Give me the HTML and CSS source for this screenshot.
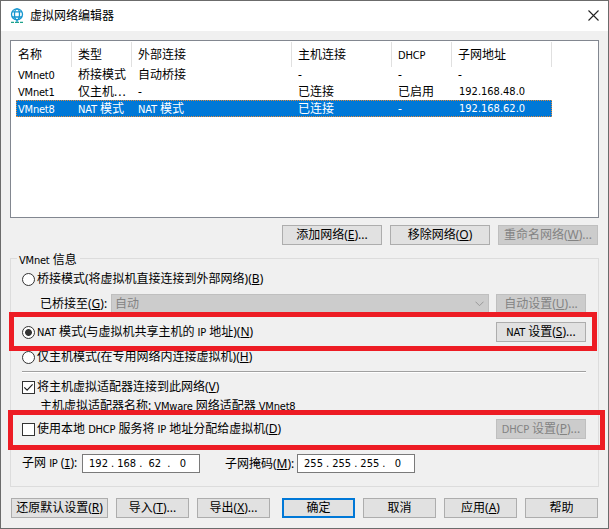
FILE: index.html
```html
<!DOCTYPE html>
<html lang="zh-CN">
<head>
<meta charset="utf-8">
<title>虚拟网络编辑器</title>
<link rel="stylesheet" href="styles.css">
</head>
<body>
<div class="window">
  <header class="titlebar">
    <svg class="app-icon" width="14" height="16" viewBox="0 0 14 16" fill="none" stroke="#1796cf" stroke-width="1.3">
      <circle cx="7" cy="6.3" r="5.5"/><ellipse cx="7" cy="6.3" rx="2.5" ry="5.5"/><path d="M2 3.8h10M2 9h10"/>
      <path stroke="#1fa38b" d="M1 14.4h3M5 14.4h4M10 14.4h3"/><path d="M7 12v2"/>
    </svg>
    <h1>虚拟网络编辑器</h1>
    <svg class="close" width="11" height="11" viewBox="0 0 11 11" stroke="#222" stroke-width="1.1"><path d="M.5.5l10 10M10.5.5l-10 10"/></svg>
  </header>

  <main>
    <section class="list">
      <div class="row head"><span>名称</span><span>类型</span><span>外部连接</span><span>主机连接</span><span><b class="en">DHCP</b></span><span>子网地址</span></div>
      <div class="row"><span><b class="en">VMnet0</b></span><span>桥接模式</span><span>自动桥接</span><span>-</span><span>-</span><span>-</span></div>
      <div class="row"><span><b class="en">VMnet1</b></span><span>仅主机<b class="dots">...</b></span><span>-</span><span>已连接</span><span>已启用</span><span class="ip">192.168.48.0</span></div>
      <div class="row selected"><span><b class="en">VMnet8</b></span><span><b class="en">NAT</b> 模式</span><span><b class="en">NAT</b> 模式</span><span>已连接</span><span>-</span><span class="ip">192.168.62.0</span></div>
    </section>

    <div class="list-actions">
      <button>添加网络(<u>E</u>)...</button>
      <button>移除网络(<u>O</u>)</button>
      <button disabled>重命名网络(<u>W</u>)...</button>
    </div>

    <section class="group">
      <h2><b class="en">VMnet</b> 信息</h2>
      <div class="line bridge"><i class="radio"></i><span>桥接模式(将虚拟机直接连接到外部网络)(<u>B</u>)</span></div>
      <div class="line bridge-to">
        <span class="bridge-label">已桥接至(<u>G</u>):</span>
        <div class="combo"><span>自动</span><svg width="9" height="6" viewBox="0 0 9 6" fill="none" stroke="#999"><path d="M.5.7l4 4 4-4"/></svg></div>
        <button disabled>自动设置(<u>U</u>)...</button>
      </div>
      <div class="line nat"><i class="radio on"></i><span><b class="en">NAT</b> 模式(与虚拟机共享主机的 <b class="en">IP</b> 地址)(<u>N</u>)</span><button><b class="en">NAT</b> 设置(<u>S</u>)...</button></div>
      <div class="line host-only"><i class="radio"></i><span>仅主机模式(在专用网络内连接虚拟机)(<u>H</u>)</span></div>
      <hr>
      <div class="line adapter"><i class="check"><svg width="11" height="11" viewBox="0 0 11 11" fill="none" stroke="#222" stroke-width="1.2"><path d="M1.3 5.3l2.8 2.8 5.5-5.7"/></svg></i><span>将主机虚拟适配器连接到此网络(<u>V</u>)</span></div>
      <div class="line adapter-name"><span>主机虚拟适配器名称: <b class="en">VMware</b> 网络适配器 <b class="en">VMnet8</b></span></div>
      <div class="line dhcp"><i class="check"></i><span>使用本地 <b class="en">DHCP</b> 服务将 <b class="en">IP</b> 地址分配给虚拟机(<u>D</u>)</span><button disabled><b class="en">DHCP</b> 设置(<u>P</u>)...</button></div>
      <div class="line subnet">
        <span class="ip-label">子网 <b class="en">IP</b> (<u class="serif-i">I</u>):</span>
        <div class="address"><b>192</b>.<b>168</b>.<b>62</b>.<b>0</b></div>
        <span class="mask-label">子网掩码(<u>M</u>):</span>
        <div class="address"><b>255</b>.<b>255</b>.<b>255</b>.<b>0</b></div>
      </div>
    </section>

    <footer>
      <button class="restore">还原默认设置(<u>R</u>)</button>
      <button>导入(<u>T</u>)...</button>
      <button>导出(<u>X</u>)...</button>
      <button class="default">确定</button>
      <button>取消</button>
      <button>应用(<u>A</u>)</button>
      <button>帮助</button>
    </footer>
  </main>
  <div class="mark mark-nat"></div>
  <div class="mark mark-dhcp"></div>
</div>
</body>
</html>
```

FILE: styles.css
```css
* { box-sizing: border-box; }
body { margin: 0; }
.window {
  position: relative;
  width: 609px;
  height: 529px;
  border: 1px solid #6b6b6b;
  background: #f0f0f0;
  color: #000;
  font: 12px/16px "Noto Sans", "Noto Sans CJK SC", sans-serif;
  white-space: nowrap;
  overflow: hidden;
}
b { font-weight: 400; }
.en, .ip, .address { font-family: "DejaVu Sans Condensed", "DejaVu Sans", sans-serif; font-stretch: condensed; }
.en { font-size: 11px; line-height: 1; letter-spacing: -0.2px; }
.dots { letter-spacing: 1px; }
.titlebar { display: flex; align-items: center; height: 30px; padding: 0 9px; background: #fff; }
.titlebar h1 { flex: 1; margin: 0 0 0 6px; font-size: 12px; font-weight: 400; }
.app-icon { margin-top: -1px; }
.close { margin-top: -2px; }
main { padding: 9px 9px 0; }
.list { height: 178px; padding: 1px 5px; border: 1px solid #828790; background: #fff; }
.row { display: grid; grid-template-columns: 56px 60px 160px 100px 60px 100px; width: 536px; height: 17px; line-height: 18px; }
.row > span { padding-left: 6px; }
.row > span:first-child { padding-left: 2px; }
.row > .ip { padding-left: 7px; font-size: 11px; }
.row.head { height: 24px; line-height: 25px; }
.head > span { border-right: 1px solid #e0e0e0; }
.selected { background: #0078d7; color: #fff; outline: 1px dotted #e08a3c; outline-offset: -1px; }
button {
  flex: none;
  width: 90px;
  height: 20px;
  padding: 0;
  border: 1px solid #adadad;
  background: #e1e1e1;
  color: #000;
  font: inherit;
  line-height: 18px;
}
button:disabled { border-color: #bfbfbf; background: #ccc; color: #838383; }
u { text-underline-offset: 1px; text-decoration-thickness: 1px; }
.serif-i { font-family: "DejaVu Sans Mono", monospace; font-size: 10px; }
.list-actions { display: flex; justify-content: flex-end; gap: 8px; margin: 7px 1px 0 0; }
.list-actions button { width: 100px; }
.group { height: 229px; margin-top: 13px; padding: 0 12px 0 11px; border: 1px solid #dcdcdc; }
.group h2 { width: max-content; height: 16px; margin: -8px 0 0 -5px; padding: 0 3px 0 2px; background: #f0f0f0; font-size: 12px; font-weight: 400; line-height: 17px; }
.line { display: flex; align-items: center; height: 18px; }
.line > button { margin-left: auto; }
.radio, .check { flex: none; width: 13px; height: 13px; margin-right: 2px; border: 1px solid #333; background: #fff; }
.radio { border-radius: 50%; }
.radio.on { background: radial-gradient(circle, #333 0 3px, #fff 3.8px); }
.check svg { display: block; }
.bridge { margin-top: 3px; }
.bridge-to { height: 20px; margin-top: 6px; padding-left: 18px; }
.bridge-label { width: 71px; }
.combo { display: flex; align-items: center; justify-content: space-between; width: 378px; height: 20px; padding: 0 4px 0 3px; border: 1px solid #bfbfbf; background: #ccc; color: #838383; }
.nat { height: 20px; margin-top: 8px; }
.host-only { margin-top: 6px; }
hr { height: 2px; margin: 5px 0 0; border: 0; border-top: 1px solid #a0a0a0; background: #fff; }
.adapter { margin-top: 5px; }
.adapter-name { margin-top: 1px; padding-left: 18px; }
.dhcp { height: 20px; margin-top: 4px; }
.subnet { height: 19px; margin-top: 15px; }
.ip-label { width: 60px; }
.mask-label { width: 72px; margin-left: 25px; }
.address { display: flex; width: 118px; height: 19px; padding-left: 3px; border: 1px solid #7a7a7a; background: #fff; font-size: 11px; line-height: 18px; }
.address b { width: 25px; text-align: center; }
footer { display: flex; gap: 8px; margin: 11px 1px 0; }
footer button { width: 73px; }
footer .restore { width: 97px; }
footer .default { margin-left: 4px; border: 2px solid #0078d7; line-height: 16px; }
.mark { position: absolute; border: 5px solid #ed1c24; }
.mark-nat { left: 8px; top: 311px; width: 588px; height: 39px; }
.mark-dhcp { left: 7px; top: 409px; width: 597px; height: 40px; }
```
